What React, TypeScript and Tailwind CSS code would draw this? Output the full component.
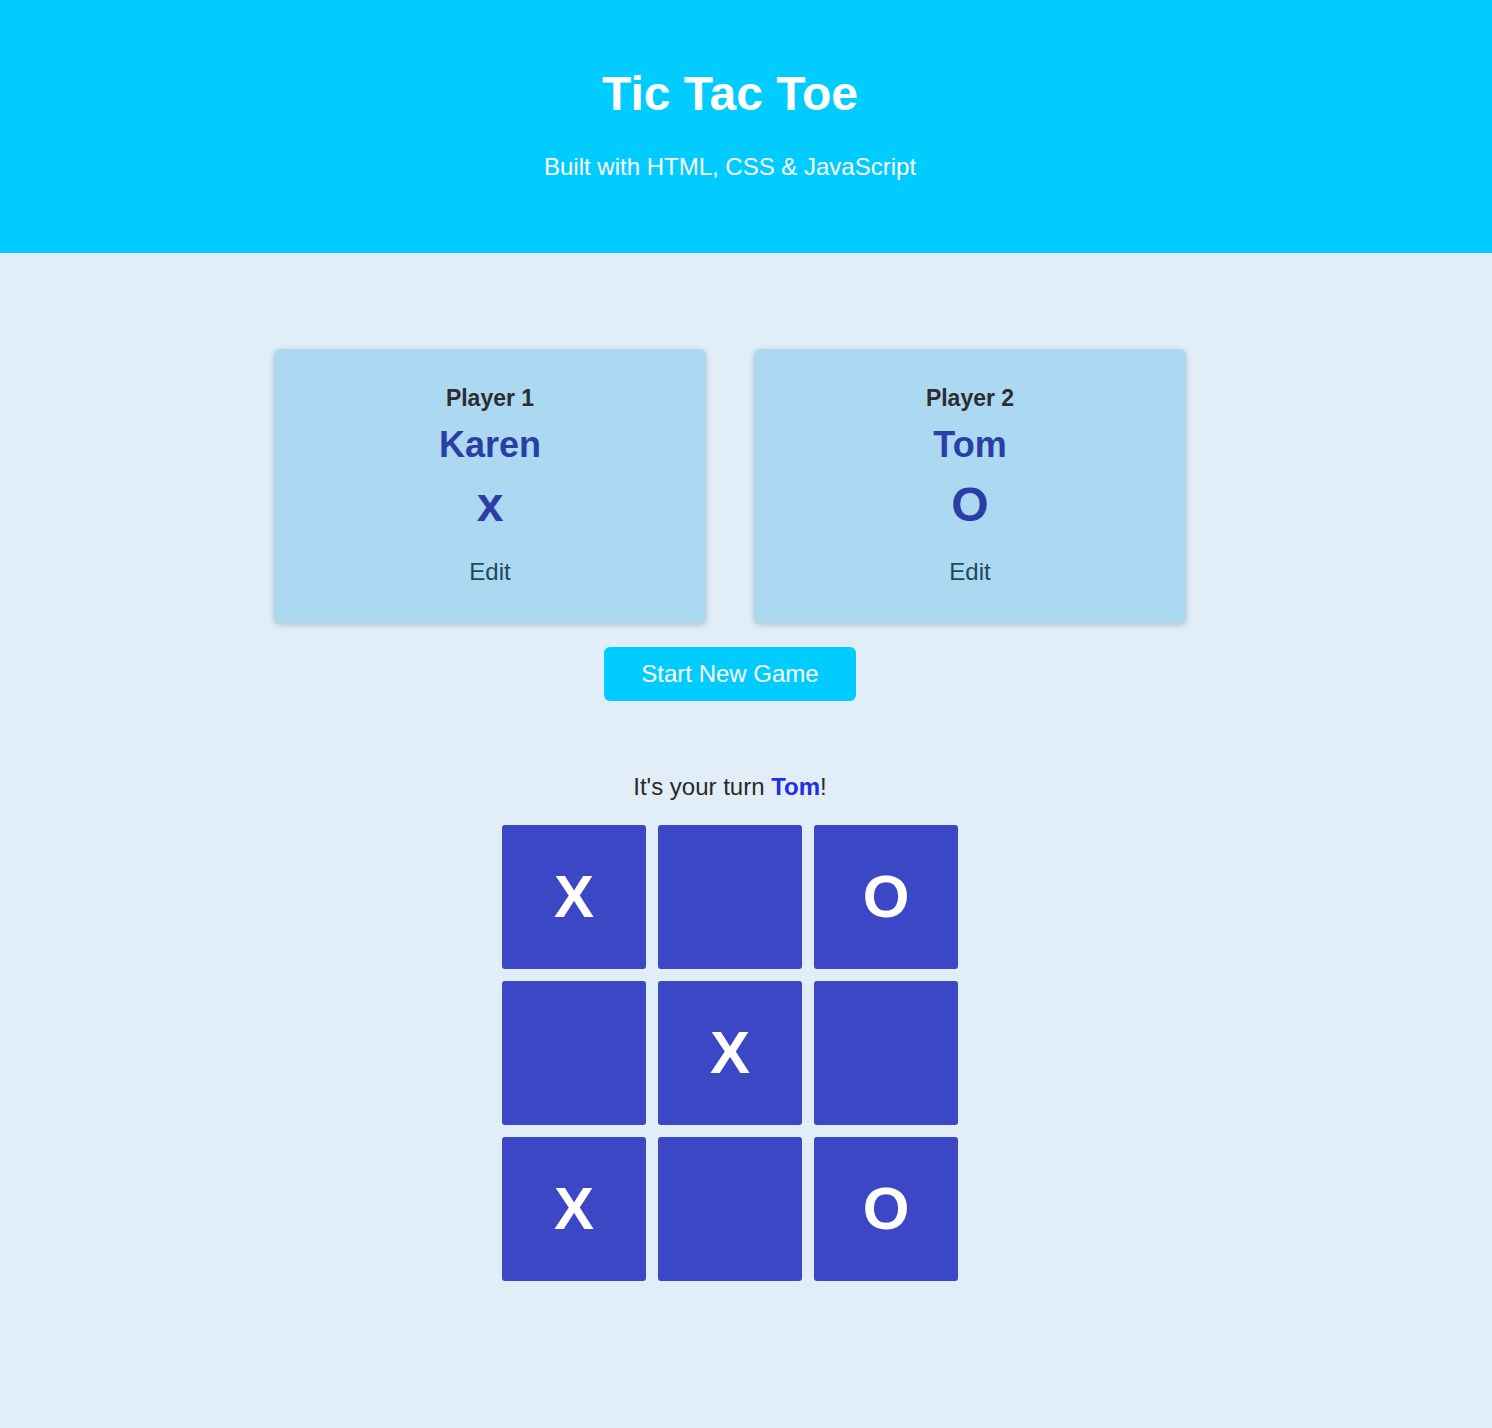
import React from "react";

const font = { fontFamily: '"Liberation Sans", Arial, Helvetica, sans-serif' };

function PlayerCard({ label, name, symbol }: { label: string; name: string; symbol: string }) {
  return (
    <div className="w-[432px] h-[274px] bg-[#acd8f2] rounded-[6px] shadow-[0_2px_6px_rgba(0,0,0,0.2)] flex flex-col items-center pt-[32px]">
      <div className="h-[34px] leading-[34px] text-[23px] font-bold text-[#2e2e2e]">{label}</div>
      <div className="mt-[8px] h-[44px] leading-[44px] text-[36px] font-bold text-[#2b3ea6]">{name}</div>
      <div className="mt-[10px] h-[56px] leading-[56px] text-[48px] font-bold text-[#2b3ea6]">{symbol}</div>
      <div className="mt-[22px] h-[34px] leading-[34px] text-[24px] text-[#1d4a56]">Edit</div>
    </div>
  );
}

export default function App() {
  const cells = ["X", "", "O", "", "X", "", "X", "", "O"];
  return (
    <div style={font} className="min-h-[1428px] bg-[#e1eef8]">
      <header className="bg-[#00ccff] h-[253px] pr-[32px] flex flex-col items-center pt-[66px]">
        <h1 className="h-[56px] leading-[56px] text-[48px] font-bold text-white">Tic Tac Toe</h1>
        <p className="mt-[29px] h-[32px] leading-[32px] text-[24px] text-white">Built with HTML, CSS &amp; JavaScript</p>
      </header>
      <main className="pr-[32px] pt-[96px] pb-[147px] flex flex-col items-center">
        <div className="flex gap-[48px]">
          <PlayerCard label="Player 1" name="Karen" symbol="x" />
          <PlayerCard label="Player 2" name="Tom" symbol="O" />
        </div>
        <button className="mt-[24px] w-[252px] h-[54px] bg-[#00ccff] rounded-[6px] text-white text-[24px]">
          Start New Game
        </button>
        <p className="mt-[70px] h-[32px] leading-[32px] text-[24px] text-[#2a2a2a]">
          It's your turn <span className="font-bold text-[#1f2ee6]">Tom</span>!
        </p>
        <div className="mt-[22px] grid grid-cols-[repeat(3,144px)] gap-[12px]">
          {cells.map((c, i) => (
            <div
              key={i}
              className="w-[144px] h-[144px] bg-[#3b47c4] rounded-[3px] flex items-center justify-center text-white text-[60px] font-bold"
            >
              {c}
            </div>
          ))}
        </div>
      </main>
    </div>
  );
}
